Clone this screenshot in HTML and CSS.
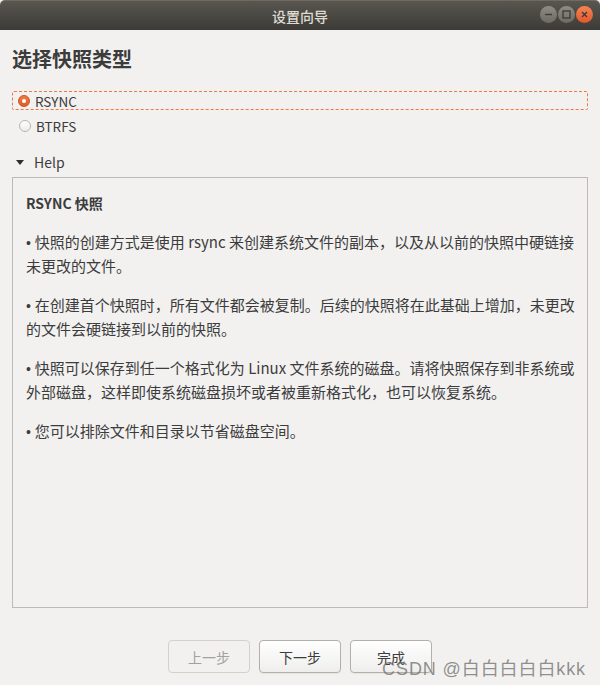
FILE: index.html
```html
<!DOCTYPE html>
<html lang="zh-CN">
<head>
  <meta charset="UTF-8">
  <title>设置向导</title>
  <link rel="stylesheet" href="styles.css">
</head>
<body>
  <div class="window">
    <div class="titlebar">
      <span class="title">设置向导</span>
      <div class="controls">
        <span class="ctl ctl-min"><svg width="17" height="17" viewBox="0 0 17 17"><line x1="5" y1="8.5" x2="12" y2="8.5" stroke="#3c3b37" stroke-width="1.4"/></svg></span>
        <span class="ctl ctl-max"><svg width="17" height="17" viewBox="0 0 17 17"><rect x="5" y="5" width="7" height="7" fill="none" stroke="#3c3b37" stroke-width="1.3"/></svg></span>
        <span class="ctl ctl-close"><svg width="17" height="17" viewBox="0 0 17 17"><path d="M6 6 L11 11 M11 6 L6 11" stroke="#3c3b37" stroke-width="1.4"/></svg></span>
      </div>
    </div>

    <div class="content">
      <h1>选择快照类型</h1>

      <div class="radio focused">
        <span class="dot checked"></span>
        <span>RSYNC</span>
      </div>
      <div class="radio">
        <span class="dot"></span>
        <span>BTRFS</span>
      </div>

      <div class="expander">
        <span class="arrow"></span>
        <span>Help</span>
      </div>

      <div class="helpbox">
        <p class="help-title">RSYNC 快照</p>
        <p class="item">快照的创建方式是使用 rsync 来创建系统文件的副本，以及从以前的快照中硬链接未更改的文件。</p>
        <p class="item">在创建首个快照时，所有文件都会被复制。后续的快照将在此基础上增加，未更改的文件会硬链接到以前的快照。</p>
        <p class="item">快照可以保存到任一个格式化为 Linux 文件系统的磁盘。请将快照保存到非系统或外部磁盘，这样即使系统磁盘损坏或者被重新格式化，也可以恢复系统。</p>
        <p class="item">您可以排除文件和目录以节省磁盘空间。</p>
      </div>

      <div class="actions">
        <button class="btn" disabled>上一步</button>
        <button class="btn">下一步</button>
        <button class="btn">完成</button>
      </div>
    </div>

    <div class="watermark">CSDN @白白白白白kkk</div>
  </div>
</body>
</html>
```

FILE: styles.css
```css
body {
  margin: 0;
  padding: 0;
  font-family: "Noto Sans CJK SC", "Noto Sans", sans-serif;
  background: #f2f1f0;
}

.window {
  width: 600px;
  height: 685px;
  position: relative;
  overflow: hidden;
  background: #f2f1f0;
}

.titlebar {
  height: 30px;
  display: flex;
  align-items: center;
  justify-content: center;
  position: relative;
  background: linear-gradient(#58564f, #3c3b37);
  border-top: 1px solid #6e6a62;
  box-sizing: border-box;
  border-radius: 5px 5px 0 0;
}

.title {
  color: #dfdbd2;
  font-size: 14px;
  font-weight: 500;
}

.controls {
  position: absolute;
  right: 7px;
  top: 5px;
  display: flex;
  gap: 1px;
}

.ctl {
  width: 17px;
  height: 17px;
  border-radius: 50%;
  display: block;
  background: linear-gradient(#8f8c86, #6d6a64);
}

.ctl svg {
  display: block;
}

.ctl-close {
  background: linear-gradient(#f58456, #e4572a);
}

.content {
  padding: 0 12px;
}

h1 {
  margin: 0;
  padding: 14px 0 0;
  height: 48px;
  box-sizing: border-box;
  font-size: 20px;
  font-weight: bold;
  color: #3c3c3c;
  line-height: 30px;
}

.radio {
  display: flex;
  align-items: center;
  gap: 5px;
  height: 19px;
  margin-top: 13px;
  padding-left: 6px;
  font-size: 13.5px;
  color: #3c3c3c;
  box-sizing: border-box;
  border: 1px solid transparent;
}

.radio + .radio {
  margin-top: 6px;
}

.radio.focused {
  border: 1px dashed #f07746;
  border-radius: 2px;
  padding-left: 5px;
}

.dot {
  width: 12px;
  height: 12px;
  box-sizing: border-box;
  border-radius: 50%;
  border: 1px solid #b8b5b0;
  background: linear-gradient(#ffffff, #ecebea);
  position: relative;
}

.dot.checked {
  border-color: #c9521f;
  background: linear-gradient(#ef7a45, #de5e27);
}

.dot.checked::after {
  content: "";
  position: absolute;
  left: 3px;
  top: 3px;
  width: 4px;
  height: 4px;
  border-radius: 50%;
  background: #fff;
}

.expander {
  display: flex;
  align-items: center;
  gap: 10px;
  margin-top: 17px;
  height: 20px;
  padding-left: 4px;
  font-size: 14px;
  color: #3c3c3c;
}

.arrow {
  width: 0;
  height: 0;
  border-left: 4px solid transparent;
  border-right: 4px solid transparent;
  border-top: 5px solid #2e2e2e;
}

.helpbox {
  margin-top: 5px;
  height: 431px;
  box-sizing: border-box;
  border: 1px solid #bebab5;
  padding: 13px 10px 0 13px;
  font-size: 15px;
  line-height: 24px;
  color: #3c3c3c;
}

.helpbox p {
  margin: 0 0 15px;
}

.helpbox .help-title {
  font-size: 14px;
  font-weight: bold;
  margin-bottom: 15px;
}

.item::before {
  content: "\2022\00a0";
  font-family: "Liberation Sans", sans-serif;
  font-size: 14px;
  line-height: 1;
}

.actions {
  display: flex;
  justify-content: center;
  gap: 9px;
  margin-top: 32px;
}

.btn {
  width: 82px;
  height: 33px;
  font-family: "Noto Sans CJK SC", "Noto Sans", sans-serif;
  font-size: 14px;
  color: #3c3c3c;
  border: 1px solid #b3afa9;
  border-radius: 4px;
  background: linear-gradient(#ffffff, #efeeed);
  box-shadow: 0 1px 1px rgba(0, 0, 0, 0.05);
  padding: 0;
}

.btn:disabled {
  color: #a3a19d;
  border-color: #d4d1cc;
  background: #f2f1f0;
  box-shadow: none;
}

.watermark {
  position: absolute;
  right: 14px;
  bottom: 5px;
  font-family: "Liberation Sans", "Noto Sans CJK SC", sans-serif;
  font-size: 18px;
  letter-spacing: 0.9px;
  color: rgba(110, 110, 110, 0.75);
}
```
